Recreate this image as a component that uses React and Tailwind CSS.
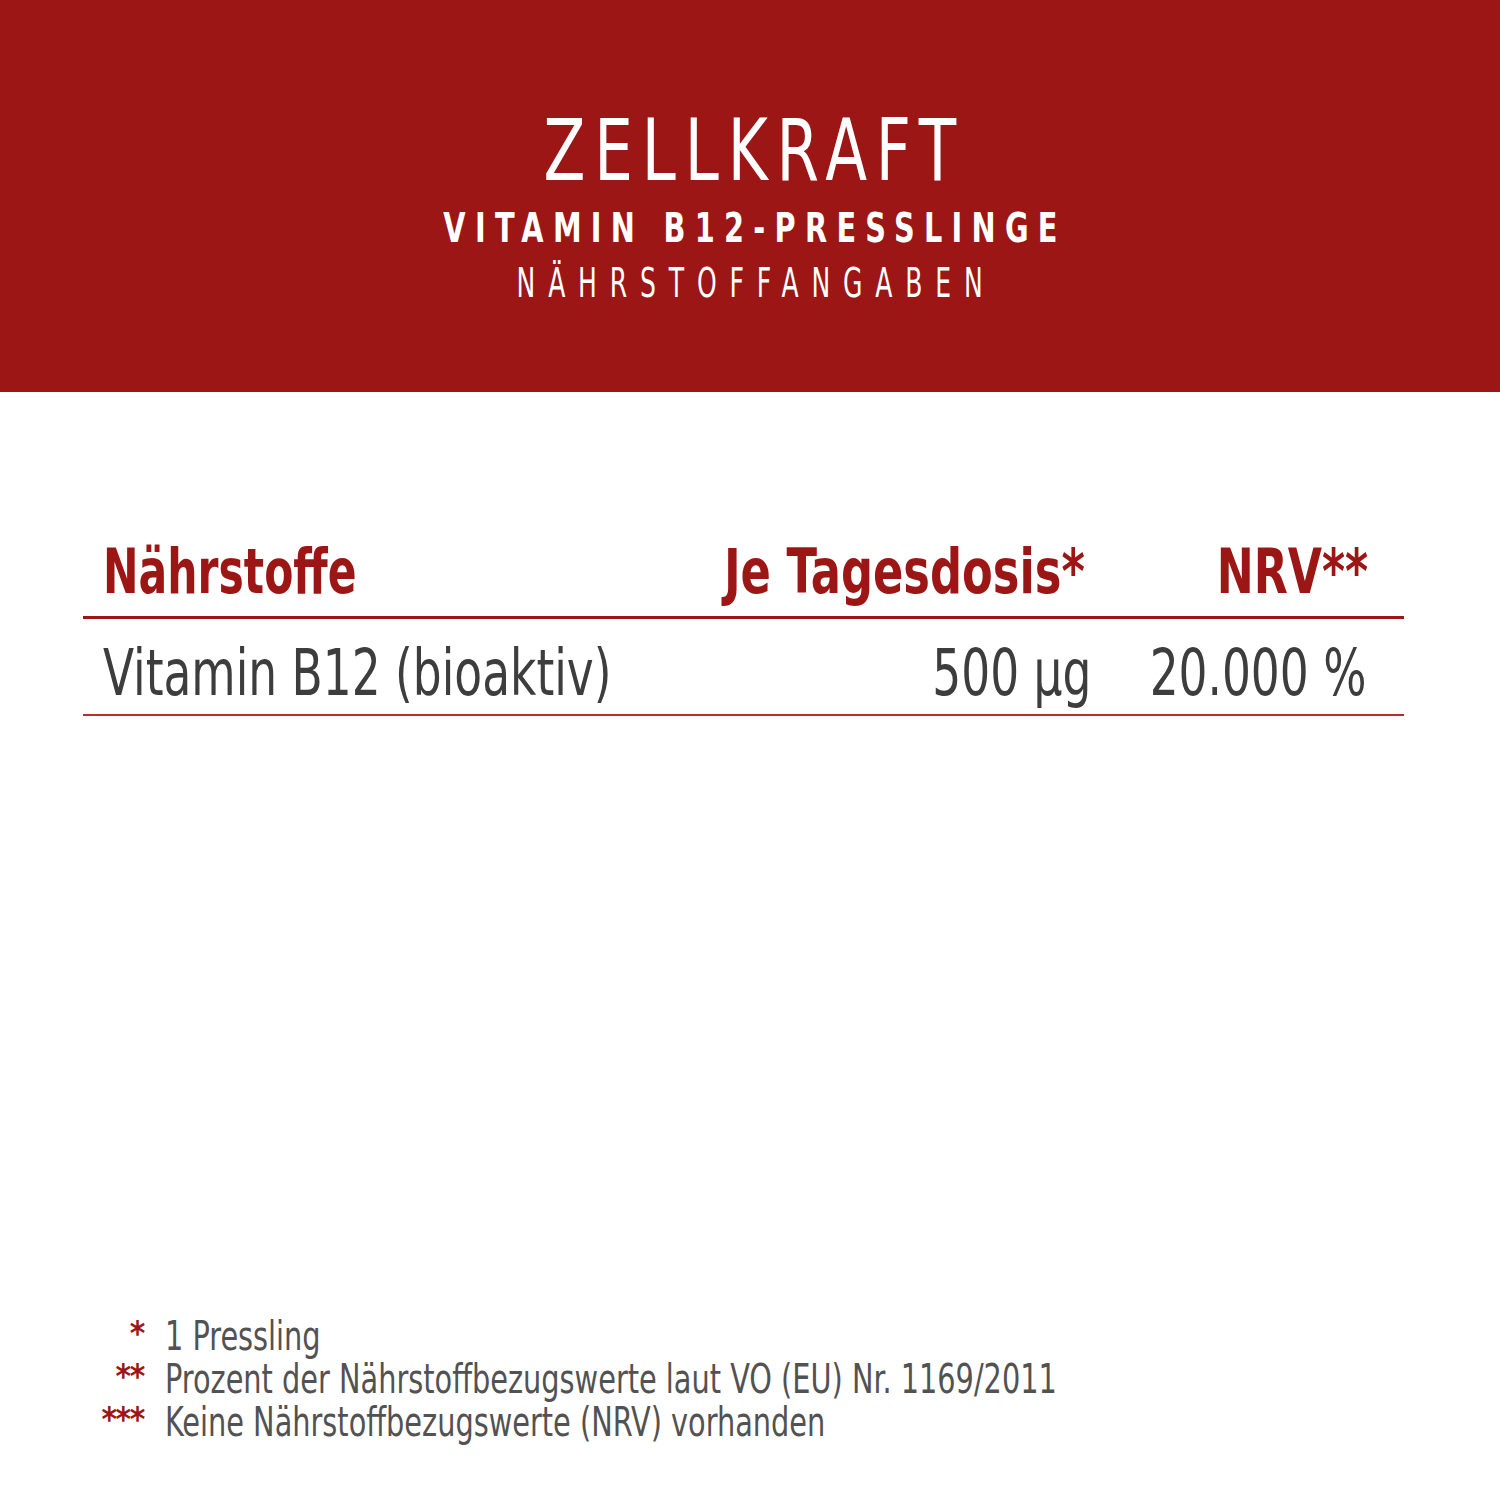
import React from 'react';

const condensed = { fontFamily: '"DejaVu Sans Condensed", "Liberation Sans Narrow", Roboto, sans-serif' };

const footnotes = [
  { mark: '*', text: '1 Pressling' },
  { mark: '**', text: 'Prozent der Nährstoffbezugswerte laut VO (EU) Nr. 1169/2011' },
  { mark: '***', text: 'Keine Nährstoffbezugswerte (NRV) vorhanden' },
];

// narrow text: the picture uses a condensed face, so squeeze the installed one
const Narrow = ({ children, className = '' }) => (
  <span className={`inline-block whitespace-nowrap ${className}`}>{children}</span>
);

const App = () => {
  return (
    <div className="w-[1500px] h-[1500px] bg-white flex flex-col overflow-hidden" style={condensed}>
      {/* Header */}
      <div className="h-[392px] bg-[#9b1614] flex flex-col items-center pt-[108px] text-white">
        <h1 className="text-[85px] leading-none font-normal whitespace-nowrap">
          <span className="inline-block scale-x-[0.8] tracking-[0.13em] pl-[0.13em]">ZELLKRAFT</span>
        </h1>
        <div className="mt-[15px] text-[40px] leading-none font-bold whitespace-nowrap">
          <span className="inline-block scale-x-[0.8] tracking-[0.29em] pl-[0.29em]">VITAMIN B12-PRESSLINGE</span>
        </div>
        <div className="mt-[15px] text-[41px] leading-none font-normal whitespace-nowrap">
          <span className="inline-block scale-x-[0.68] tracking-[0.46em] pl-[0.46em]">NÄHRSTOFFANGABEN</span>
        </div>
      </div>

      {/* Table */}
      <div className="ml-[83px] mr-[96px] mt-[148px]">
        <div className="flex pb-[13px] border-b-[3px] border-[#9b1614] text-[#9b1614] text-[63px] leading-none font-bold">
          <div className="flex-1 pl-[20px] flex">
            <Narrow className="origin-left scale-x-[0.75]">Nährstoffe</Narrow>
          </div>
          <div className="w-[420px] flex justify-end">
            <Narrow className="origin-right scale-x-[0.79]">Je Tagesdosis*</Narrow>
          </div>
          <div className="w-[319px] flex justify-end pr-[36px]">
            <Narrow className="origin-right scale-x-[0.78]">NRV**</Narrow>
          </div>
        </div>
        <div className="flex pt-[22px] pb-[9px] border-b-2 border-[#b3302d] text-[#3d3d3d] text-[64px] leading-none">
          <div className="flex-1 pl-[20px] flex">
            <Narrow className="origin-left scale-x-[0.79]">Vitamin B12 (bioaktiv)</Narrow>
          </div>
          <div className="w-[420px] flex justify-end">
            <Narrow className="origin-right scale-x-[0.79]">500 µg</Narrow>
          </div>
          <div className="w-[319px] flex justify-end pr-[38px]">
            <Narrow className="origin-right scale-x-[0.79]">20.000 %</Narrow>
          </div>
        </div>
      </div>

      <div className="flex-1" />

      {/* Footnotes */}
      <div className="pl-[90px] pb-[56px] flex flex-col text-[40px] leading-[43px] text-[#525252]">
        {footnotes.map((f) => (
          <div key={f.mark} className="flex">
            <span className="w-[54px] text-right text-[#9b1614] font-bold text-[33px] leading-[38px] tracking-[-0.04em]">{f.mark}</span>
            <span className="ml-[21px] flex">
              <Narrow className="origin-left scale-x-[0.8]">{f.text}</Narrow>
            </span>
          </div>
        ))}
      </div>
    </div>
  );
};

export default App;
